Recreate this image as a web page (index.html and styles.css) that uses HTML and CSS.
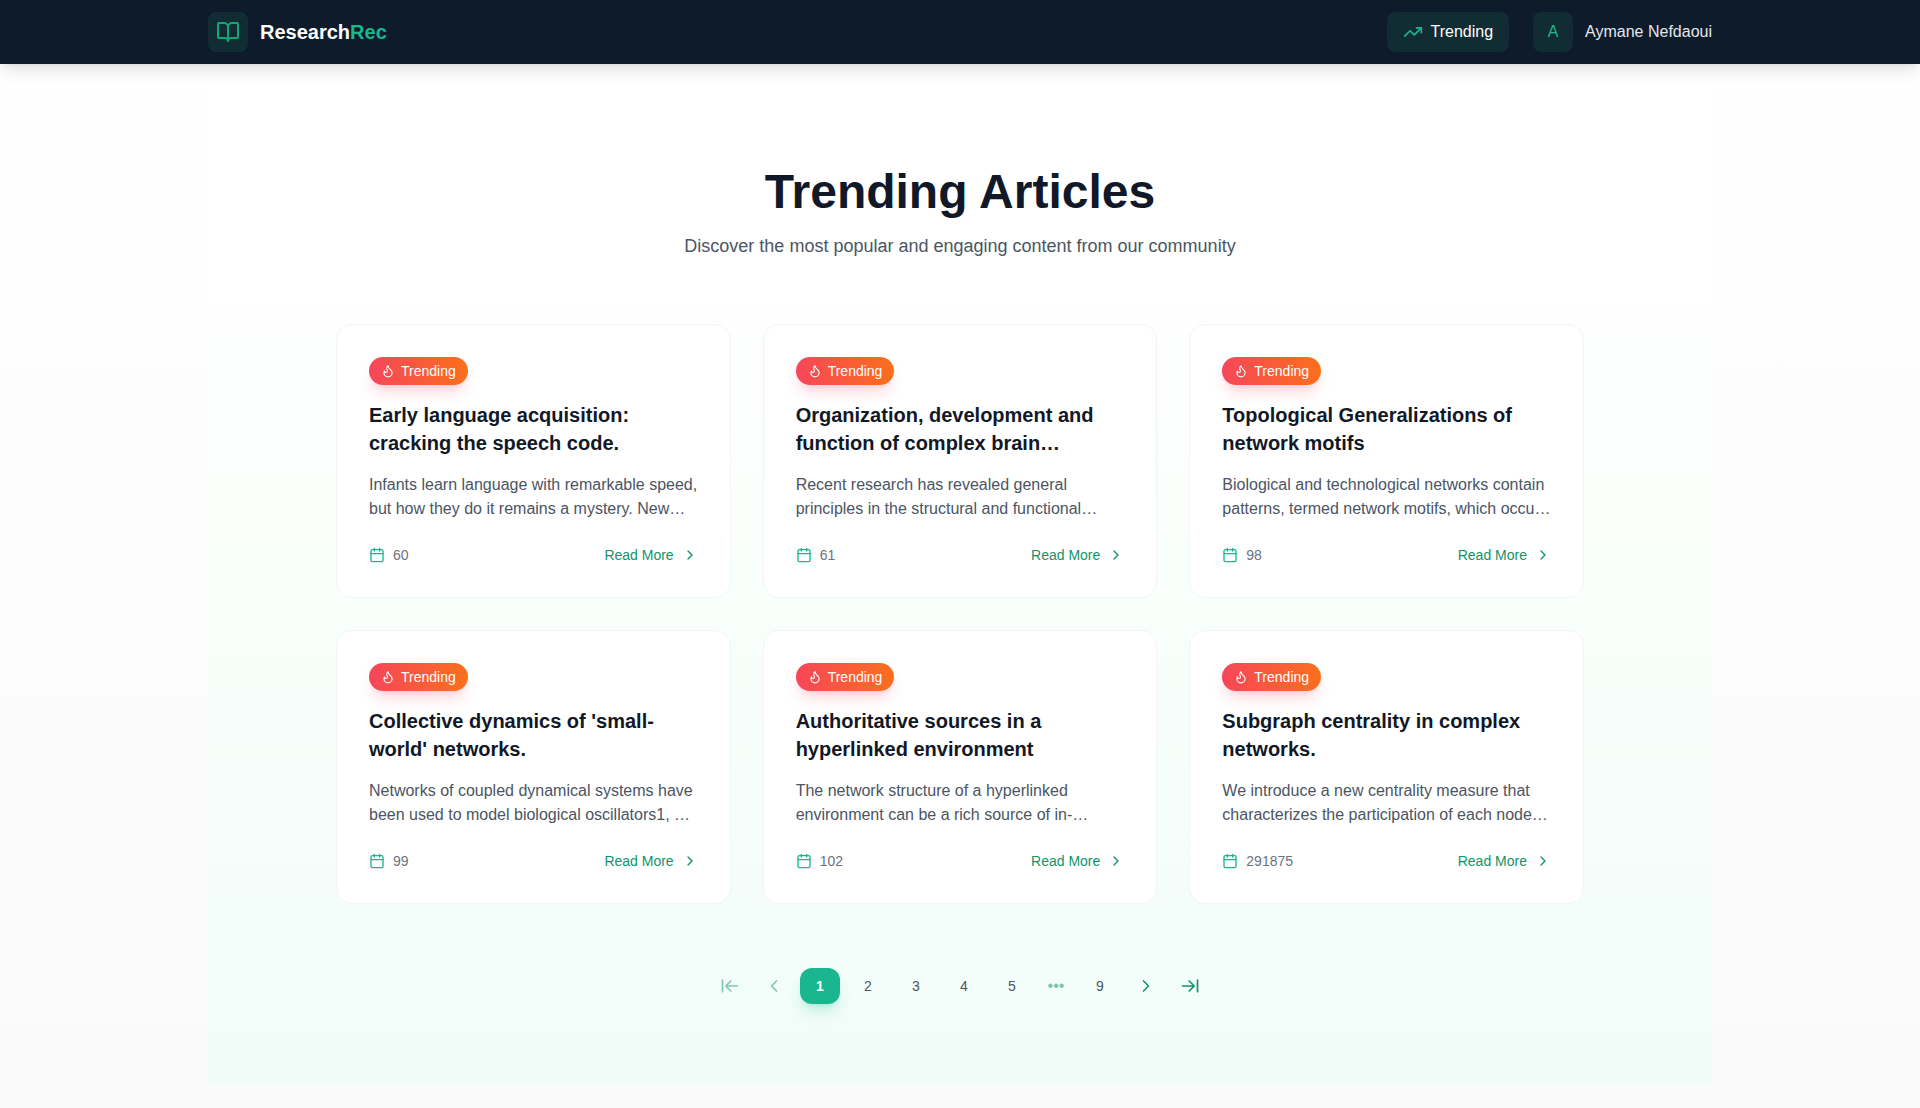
FILE: index.html
```html
<!DOCTYPE html>
<html lang="en">
<head>
    <meta charset="UTF-8">
    <meta name="viewport" content="width=device-width, initial-scale=1.0">
    <title>ResearchRec - Trending Articles</title>
    <link rel="stylesheet" href="styles.css">
</head>
<body>
    <!-- Shared icons -->
    <svg class="icon-defs" aria-hidden="true">
        <symbol id="icon-flame" viewBox="0 0 24 24">
            <path d="M8.5 14.5A2.5 2.5 0 0 0 11 12c0-1.38-.5-2-1-3-1.072-2.143-.224-4.054 2-6 .5 2.5 2 4.9 4 6.5 2 1.6 3 3.5 3 5.5a7 7 0 1 1-14 0c0-1.153.433-2.294 1-3a2.5 2.5 0 0 0 2.5 2.5z"/>
        </symbol>
        <symbol id="icon-calendar" viewBox="0 0 24 24">
            <path d="M8 2v4M16 2v4M3 10h18"/>
            <rect x="3" y="4" width="18" height="18" rx="2"/>
        </symbol>
        <symbol id="icon-chevron-right" viewBox="0 0 24 24">
            <path d="m9 18 6-6-6-6"/>
        </symbol>
        <symbol id="icon-chevron-left" viewBox="0 0 24 24">
            <path d="m15 18-6-6 6-6"/>
        </symbol>
    </svg>

    <header class="header">
        <div class="container header-inner">
            <a class="brand" href="#">
                <span class="tile">
                    <svg class="icon icon-lg" viewBox="0 0 24 24">
                        <path d="M12 7v14"/>
                        <path d="M3 18a1 1 0 0 1-1-1V4a1 1 0 0 1 1-1h5a4 4 0 0 1 4 4 4 4 0 0 1 4-4h5a1 1 0 0 1 1 1v13a1 1 0 0 1-1 1h-6a3 3 0 0 0-3 3 3 3 0 0 0-3-3z"/>
                    </svg>
                </span>
                <span class="brand-name">Research<span class="brand-accent">Rec</span></span>
            </a>
            <nav class="nav">
                <a class="nav-link" href="#">
                    <svg class="icon icon-md" viewBox="0 0 24 24">
                        <path d="m22 7-8.500 8.500-5-5L2 17"/>
                        <path d="M16 7h6v6"/>
                    </svg>
                    Trending
                </a>
                <a class="user" href="#">
                    <span class="tile">A</span>
                    <span>Aymane Nefdaoui</span>
                </a>
            </nav>
        </div>
    </header>

    <main class="container page">
        <section class="trending">
            <div class="intro">
                <h1>Trending Articles</h1>
                <p>Discover the most popular and engaging content from our community</p>
            </div>

            <div class="grid">
                <article class="card">
                    <span class="badge"><svg class="icon icon-xs"><use href="#icon-flame"/></svg>Trending</span>
                    <h2>Early language acquisition: cracking the speech code.</h2>
                    <p class="summary">Infants learn language with remarkable speed, but how they do it remains a mystery. New…</p>
                    <div class="card-footer">
                        <span class="date"><svg class="icon icon-sm"><use href="#icon-calendar"/></svg>60</span>
                        <a class="read-more" href="#">Read More<svg class="icon icon-sm"><use href="#icon-chevron-right"/></svg></a>
                    </div>
                </article>

                <article class="card">
                    <span class="badge"><svg class="icon icon-xs"><use href="#icon-flame"/></svg>Trending</span>
                    <h2>Organization, development and function of complex brain…</h2>
                    <p class="summary">Recent research has revealed general principles in the structural and functional…</p>
                    <div class="card-footer">
                        <span class="date"><svg class="icon icon-sm"><use href="#icon-calendar"/></svg>61</span>
                        <a class="read-more" href="#">Read More<svg class="icon icon-sm"><use href="#icon-chevron-right"/></svg></a>
                    </div>
                </article>

                <article class="card">
                    <span class="badge"><svg class="icon icon-xs"><use href="#icon-flame"/></svg>Trending</span>
                    <h2>Topological Generalizations of network motifs</h2>
                    <p class="summary">Biological and technological networks contain patterns, termed network motifs, which occu…</p>
                    <div class="card-footer">
                        <span class="date"><svg class="icon icon-sm"><use href="#icon-calendar"/></svg>98</span>
                        <a class="read-more" href="#">Read More<svg class="icon icon-sm"><use href="#icon-chevron-right"/></svg></a>
                    </div>
                </article>

                <article class="card">
                    <span class="badge"><svg class="icon icon-xs"><use href="#icon-flame"/></svg>Trending</span>
                    <h2>Collective dynamics of 'small-world' networks.</h2>
                    <p class="summary">Networks of coupled dynamical systems have been used to model biological oscillators1, …</p>
                    <div class="card-footer">
                        <span class="date"><svg class="icon icon-sm"><use href="#icon-calendar"/></svg>99</span>
                        <a class="read-more" href="#">Read More<svg class="icon icon-sm"><use href="#icon-chevron-right"/></svg></a>
                    </div>
                </article>

                <article class="card">
                    <span class="badge"><svg class="icon icon-xs"><use href="#icon-flame"/></svg>Trending</span>
                    <h2>Authoritative sources in a hyperlinked environment</h2>
                    <p class="summary">The network structure of a hyperlinked environment can be a rich source of in-…</p>
                    <div class="card-footer">
                        <span class="date"><svg class="icon icon-sm"><use href="#icon-calendar"/></svg>102</span>
                        <a class="read-more" href="#">Read More<svg class="icon icon-sm"><use href="#icon-chevron-right"/></svg></a>
                    </div>
                </article>

                <article class="card">
                    <span class="badge"><svg class="icon icon-xs"><use href="#icon-flame"/></svg>Trending</span>
                    <h2>Subgraph centrality in complex networks.</h2>
                    <p class="summary">We introduce a new centrality measure that characterizes the participation of each node…</p>
                    <div class="card-footer">
                        <span class="date"><svg class="icon icon-sm"><use href="#icon-calendar"/></svg>291875</span>
                        <a class="read-more" href="#">Read More<svg class="icon icon-sm"><use href="#icon-chevron-right"/></svg></a>
                    </div>
                </article>
            </div>

            <nav class="pagination" aria-label="Pagination">
                <button class="page-arrow" type="button" aria-label="First page" disabled>
                    <svg class="icon icon-md" viewBox="0 0 24 24"><path d="M3 19V5M13 6l-6 6 6 6M7 12h14"/></svg>
                </button>
                <button class="page-arrow" type="button" aria-label="Previous page" disabled>
                    <svg class="icon icon-md"><use href="#icon-chevron-left"/></svg>
                </button>
                <button class="page-number active" type="button" aria-current="page">1</button>
                <button class="page-number" type="button">2</button>
                <button class="page-number" type="button">3</button>
                <button class="page-number" type="button">4</button>
                <button class="page-number" type="button">5</button>
                <span class="page-dots">•••</span>
                <button class="page-number" type="button">9</button>
                <button class="page-arrow" type="button" aria-label="Next page">
                    <svg class="icon icon-md"><use href="#icon-chevron-right"/></svg>
                </button>
                <button class="page-arrow" type="button" aria-label="Last page">
                    <svg class="icon icon-md" viewBox="0 0 24 24"><path d="M17 12H3M11 18l6-6-6-6M21 5v14"/></svg>
                </button>
            </nav>
        </section>
    </main>
</body>
</html>
```

FILE: styles.css
```css
* {
    box-sizing: border-box;
}
body {
    margin: 0;
    min-height: 100vh;
    font-family: "Liberation Sans", Arial, sans-serif;
    font-size: 16px;
    line-height: 24px;
    color: #111827;
    background: linear-gradient(to bottom, #ffffff, #fafafa);
}
h1, h2, p {
    margin: 0;
}
a {
    color: inherit;
    text-decoration: none;
}
button {
    padding: 0;
    border: none;
    background: none;
    font-family: inherit;
    cursor: pointer;
}

/* Icons */
.icon-defs {
    display: none;
}
.icon {
    flex-shrink: 0;
    fill: none;
    stroke: currentColor;
    stroke-width: 2;
    stroke-linecap: round;
    stroke-linejoin: round;
}
.icon-xs {
    width: 14px;
    height: 14px;
}
.icon-sm {
    width: 16px;
    height: 16px;
}
.icon-md {
    width: 20px;
    height: 20px;
}
.icon-lg {
    width: 24px;
    height: 24px;
}

.container {
    width: 100%;
    max-width: 1536px;
    margin: 0 auto;
    padding: 0 16px;
}

/* Header */
.header {
    position: relative;
    background-color: #0d1b2a;
    box-shadow: 0 10px 15px -3px rgba(0, 0, 0, 0.1), 0 4px 6px -4px rgba(0, 0, 0, 0.1);
}
.header-inner {
    display: flex;
    align-items: center;
    justify-content: space-between;
    height: 64px;
}
.brand, .user {
    display: flex;
    align-items: center;
    gap: 12px;
}
.tile {
    display: flex;
    align-items: center;
    justify-content: center;
    width: 40px;
    height: 40px;
    border-radius: 8px;
    color: #1ab68e;
    background-color: #122c33;
}
.brand .icon {
    color: #15a577;
}
.brand-name {
    font-size: 20px;
    line-height: 28px;
    font-weight: 700;
    color: #ffffff;
}
.brand-accent {
    color: #1ab68e;
}
.nav {
    display: flex;
    align-items: center;
    gap: 24px;
}
.nav-link {
    display: flex;
    align-items: center;
    gap: 8px;
    height: 40px;
    padding: 0 16px;
    border-radius: 8px;
    color: #ffffff;
    background-color: #122c33;
}
.nav-link .icon {
    color: #1ab68e;
}
.user {
    color: #e5e7eb;
}

/* Trending section */
.page {
    padding-top: 24px;
    padding-bottom: 24px;
}
.trending {
    padding: 80px 16px;
    background: linear-gradient(to bottom, #ffffff 15%, #f9fffb 50%, #f1fcf9);
}
.intro {
    margin-bottom: 64px;
    text-align: center;
}
.intro h1 {
    margin-bottom: 16px;
    font-size: 48px;
    line-height: 48px;
    font-weight: 700;
}
.intro p {
    font-size: 18px;
    line-height: 28px;
    color: #4b5563;
}
.grid {
    display: grid;
    grid-template-columns: repeat(3, 1fr);
    gap: 32px;
    max-width: 1248px;
    margin: 0 auto;
}
.card {
    display: flex;
    flex-direction: column;
    align-items: flex-start;
    padding: 32px;
    border: 1px solid #f3f5f5;
    border-radius: 16px;
    background-color: #ffffff;
}
.badge {
    display: flex;
    align-items: center;
    gap: 6px;
    margin-bottom: 16px;
    padding: 4px 12px;
    border-radius: 14px;
    font-size: 14px;
    line-height: 20px;
    color: #ffffff;
    background: linear-gradient(to right, #f6465a, #fb6f1c);
    box-shadow: 0 10px 15px -3px rgba(244, 63, 94, 0.2), 0 4px 6px -4px rgba(244, 63, 94, 0.2);
}
.card h2 {
    margin-bottom: 16px;
    font-size: 20px;
    line-height: 28px;
    font-weight: 700;
}
.summary {
    margin-bottom: 24px;
    color: #4b5563;
}
.card-footer {
    display: flex;
    align-items: center;
    justify-content: space-between;
    width: 100%;
    margin-top: auto;
    font-size: 14px;
    line-height: 20px;
}
.date, .read-more {
    display: flex;
    align-items: center;
    gap: 8px;
}
.date {
    color: #6b7280;
}
.date .icon {
    color: #1ab68e;
}
.read-more {
    color: #109468;
}

/* Pagination */
.pagination {
    display: flex;
    align-items: center;
    justify-content: center;
    gap: 8px;
    margin-top: 64px;
}
.page-arrow {
    display: flex;
    align-items: center;
    justify-content: center;
    width: 36px;
    height: 36px;
    color: #109468;
}
.page-arrow:disabled {
    opacity: 0.5;
    cursor: default;
}
.page-number {
    width: 40px;
    height: 36px;
    border-radius: 12px;
    font-size: 14px;
    line-height: 20px;
    color: #4b5563;
}
.page-number.active {
    font-weight: 700;
    color: #ffffff;
    background-color: #1ab68e;
    box-shadow: 0 10px 15px -3px rgba(26, 182, 142, 0.2), 0 4px 6px -4px rgba(26, 182, 142, 0.3);
}
.page-dots {
    width: 32px;
    text-align: center;
    color: #7cc5ae;
}
```
